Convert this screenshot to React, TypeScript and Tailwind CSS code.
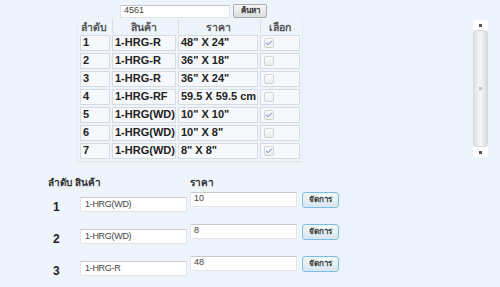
import { Check } from 'lucide-react';

const rows = [
  { no: '1', sku: '1-HRG-R', size: '48" X 24"', on: true },
  { no: '2', sku: '1-HRG-R', size: '36" X 18"', on: false },
  { no: '3', sku: '1-HRG-R', size: '36" X 24"', on: false },
  { no: '4', sku: '1-HRG-RF', size: '59.5 X 59.5 cm', on: false },
  { no: '5', sku: '1-HRG(WD)', size: '10" X 10"', on: true },
  { no: '6', sku: '1-HRG(WD)', size: '10" X 8"', on: false },
  { no: '7', sku: '1-HRG(WD)', size: '8" X 8"', on: true },
];

const picked = [
  { no: '1', sku: '1-HRG(WD)', price: '10' },
  { no: '2', sku: '1-HRG(WD)', price: '8' },
  { no: '3', sku: '1-HRG-R', price: '48' },
];

const font = { fontFamily: 'Tahoma, "Liberation Sans", "Noto Sans", sans-serif' };

function Box({ on }: { on: boolean }) {
  return (
    <span className="flex h-[10px] w-[10px] items-center justify-center rounded-[2px] border border-[#d2d5d8] bg-gradient-to-b from-[#fdfdfd] to-[#eceef0]">
      {on && <Check className="h-[8px] w-[8px] text-[#5b72c0]" strokeWidth={3} />}
    </span>
  );
}

export default function App() {
  return (
    <div className="h-[287px] w-[500px] overflow-hidden bg-[#eef4fb] text-[#222]" style={font}>
      {/* บนสุด: กล่องค้นหา + ตาราง พร้อม scrollbar */}
      <div className="flex h-[160px]">
        <div className="flex-1 pl-[78px] pt-[4px]">
          <div className="ml-[42px] flex h-[14px] items-center gap-[3px]">
            <div className="flex h-[13px] w-[110px] items-center border border-[#dfe3e6] border-t-[#c3c7ca] bg-white pl-[3px] text-[9px] text-[#444]">
              4561
            </div>
            <button className="flex h-[14px] w-[34px] items-center justify-center rounded-[2px] border border-[#a9adb0] bg-gradient-to-b from-[#f7f7f7] to-[#dcdcdc] text-[8px] font-bold text-[#333]">
              ค้นหา
            </button>
          </div>
          <table className="table-fixed border-separate border-spacing-[2px] text-[11px] font-bold leading-none shadow-[0_1px_2px_rgba(0,0,0,0.1)]">
            <colgroup>
              <col className="w-[30px]" />
              <col className="w-[62px]" />
              <col className="w-[80px]" />
              <col className="w-[40px]" />
            </colgroup>
            <thead>
              <tr className="h-[12px] text-[10.5px] text-[#555]">
                <th className="pl-[1px] pt-[2px] text-left font-bold">ลำดับ</th>
                <th className="border-l border-[#d9dde1] pt-[2px] font-bold">สินค้า</th>
                <th className="border-l border-[#d9dde1] pt-[2px] font-bold">ราคา</th>
                <th className="border-l border-[#d9dde1] pt-[2px] font-bold">เลือก</th>
              </tr>
            </thead>
            <tbody>
              {rows.map((r) => (
                <tr key={r.no} className="h-[16px]">
                  <td className="border border-[#d8dce0] bg-[#f6f8fb] pl-[2px]">{r.no}</td>
                  <td className="whitespace-nowrap border border-[#d8dce0] bg-[#f6f8fb] pl-[2px]">{r.sku}</td>
                  <td className="whitespace-nowrap border border-[#d8dce0] bg-[#f6f8fb] pl-[2px]">{r.size}</td>
                  <td className="border border-[#d8dce0] bg-[#f6f8fb] pl-[3px]">
                    <Box on={r.on} />
                  </td>
                </tr>
              ))}
            </tbody>
          </table>
        </div>
        {/* scrollbar */}
        <div className="mr-[12px] flex w-[15px] flex-col pt-[20px] pb-[3px]">
          <div className="flex h-[10px] items-center justify-center rounded-t-[3px] bg-white">
            <span className="h-[3px] w-[3px] bg-[#555]" />
          </div>
          <div className="flex flex-1 items-center justify-center rounded-[4px] border border-[#d6d9dc] bg-gradient-to-r from-[#dfe2e5] via-[#f5f6f7] to-[#d9dcdf]">
            <span className="h-[3px] w-[3px] bg-[#c4c4c4]" />
          </div>
          <div className="flex h-[10px] items-center justify-center rounded-b-[3px] bg-white">
            <span className="h-[3px] w-[3px] bg-[#555]" />
          </div>
        </div>
      </div>

      {/* รายการที่เลือก */}
      <div className="pl-[48px] pt-[15px]">
        <div className="flex h-[17px] text-[10px] font-bold text-[#333]">
          <span className="w-[142px]">ลำดับ สินค้า</span>
          <span>ราคา</span>
        </div>
        {picked.map((p) => (
          <div key={p.no} className="flex h-[32px] items-start">
            <span className="mt-[6px] w-[32px] pl-[5px] text-[12px] font-bold">{p.no}</span>
            <div className="mt-[5px] flex h-[15px] w-[107px] items-center border border-[#e2e5e8] border-t-[#c6cacd] bg-white pl-[4px] text-[9px] tracking-[-0.3px] text-[#444]">
              {p.sku}
            </div>
            <div className="ml-[3px] flex h-[15px] w-[107px] items-start border border-[#e2e5e8] border-t-[#c6cacd] bg-white pl-[3px] text-[9px] leading-[11px] text-[#444]">
              {p.price}
            </div>
            <button className="ml-[5px] flex h-[16px] w-[37px] items-center justify-center rounded-[3px] border border-[#7cbde0] bg-gradient-to-b from-[#f3f8fb] to-[#d7e6ef] text-[8px] font-bold text-[#333]">
              จัดการ
            </button>
          </div>
        ))}
      </div>
    </div>
  );
}
